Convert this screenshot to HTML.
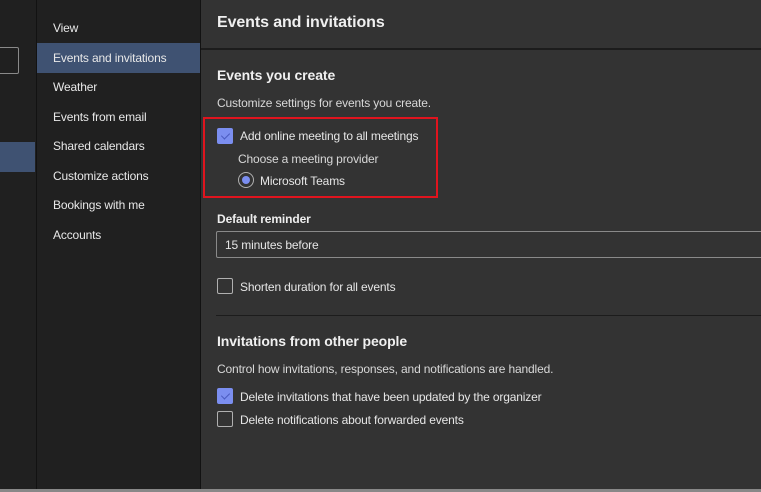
<!DOCTYPE html>
<html><head><style>
*{margin:0;padding:0;box-sizing:border-box}
body{width:761px;height:492px;overflow:hidden;background:#333;font-family:"Liberation Sans",sans-serif;color:#e6e6e6;position:relative}
.a{position:absolute}
.nav{font-size:12px;color:#e8e8e8;letter-spacing:-0.15px}
.cb{position:absolute;width:16px;height:16px;border:1px solid #b0b0b0;border-radius:2px}
.cb.on{background:#7b8ef0;border-color:#7b8ef0}
.cb.on:after{content:"";position:absolute;left:5px;top:2px;width:4px;height:7px;border:solid #4a5bc0;border-width:0 1px 1px 0;transform:rotate(45deg)}
.t{position:absolute;font-size:12px;color:#e6e6e6;white-space:nowrap;letter-spacing:-0.15px}
</style></head><body>
<div class="a" style="left:0;top:0;width:36px;height:492px;background:#202020"></div>
<div class="a" style="left:36px;top:0;width:1px;height:492px;background:#121212"></div>
<div class="a" style="left:0;top:47px;width:19px;height:27px;border:1px solid #8a8a8a;border-left:none;border-radius:0 2px 2px 0"></div>
<div class="a" style="left:0;top:142px;width:35px;height:30px;background:#3f5272"></div>
<div class="a" style="left:37px;top:0;width:163px;height:492px;background:#202020"></div>
<div class="a" style="left:200px;top:0;width:1px;height:492px;background:#121212"></div>
<div class="a" style="left:37px;top:43px;width:163px;height:30px;background:#3f5272"></div>
<div class="a nav" style="left:53px;top:21px">View</div>
<div class="a nav" style="left:53px;top:51px">Events and invitations</div>
<div class="a nav" style="left:53px;top:80px">Weather</div>
<div class="a nav" style="left:53px;top:110px">Events from email</div>
<div class="a nav" style="left:53px;top:139px">Shared calendars</div>
<div class="a nav" style="left:53px;top:169px">Customize actions</div>
<div class="a nav" style="left:53px;top:198px">Bookings with me</div>
<div class="a nav" style="left:53px;top:228px">Accounts</div>
<div class="a" style="left:0;top:489px;width:761px;height:3px;background:#888"></div>
<div class="a" style="left:201px;top:48px;width:560px;height:2px;background:#1c1c1c"></div>
<div class="a" style="left:217px;top:14px;font-size:16px;font-weight:bold;color:#f0f0f0;letter-spacing:-0.1px">Events and invitations</div>
<div class="a" style="left:217px;top:67px;font-size:14px;font-weight:bold;color:#f0f0f0;letter-spacing:-0.1px">Events you create</div>
<div class="t" style="left:217px;top:96px;color:#d8d8d8">Customize settings for events you create.</div>
<div class="a" style="left:203px;top:117px;width:235px;height:81px;border:2px solid #e0141e"></div>
<div class="cb on" style="left:217px;top:128px"></div>
<div class="t" style="left:240px;top:129px">Add online meeting to all meetings</div>
<div class="t" style="left:238px;top:152px;color:#d8d8d8">Choose a meeting provider</div>
<div class="a" style="left:238px;top:172px;width:16px;height:16px;border:1px solid #b0b0b0;border-radius:50%"></div>
<div class="a" style="left:242px;top:176px;width:8px;height:8px;background:#7b8ef0;border-radius:50%"></div>
<div class="t" style="left:260px;top:174px">Microsoft Teams</div>
<div class="a" style="left:217px;top:212px;font-size:12px;font-weight:bold;color:#eee;letter-spacing:-0.1px">Default reminder</div>
<div class="a" style="left:216px;top:231px;width:560px;height:27px;border:1px solid #8a8a8a;border-radius:2px;background:#333"></div>
<div class="t" style="left:225px;top:238px">15 minutes before</div>
<div class="cb" style="left:217px;top:278px"></div>
<div class="t" style="left:240px;top:280px">Shorten duration for all events</div>
<div class="a" style="left:216px;top:315px;width:545px;height:1px;background:#1c1c1c"></div>
<div class="a" style="left:217px;top:333px;font-size:14px;font-weight:bold;color:#f0f0f0;letter-spacing:-0.1px">Invitations from other people</div>
<div class="t" style="left:217px;top:362px;color:#d8d8d8">Control how invitations, responses, and notifications are handled.</div>
<div class="cb on" style="left:217px;top:388px"></div>
<div class="t" style="left:240px;top:390px">Delete invitations that have been updated by the organizer</div>
<div class="cb" style="left:217px;top:411px"></div>
<div class="t" style="left:240px;top:413px">Delete notifications about forwarded events</div>
</body></html>
